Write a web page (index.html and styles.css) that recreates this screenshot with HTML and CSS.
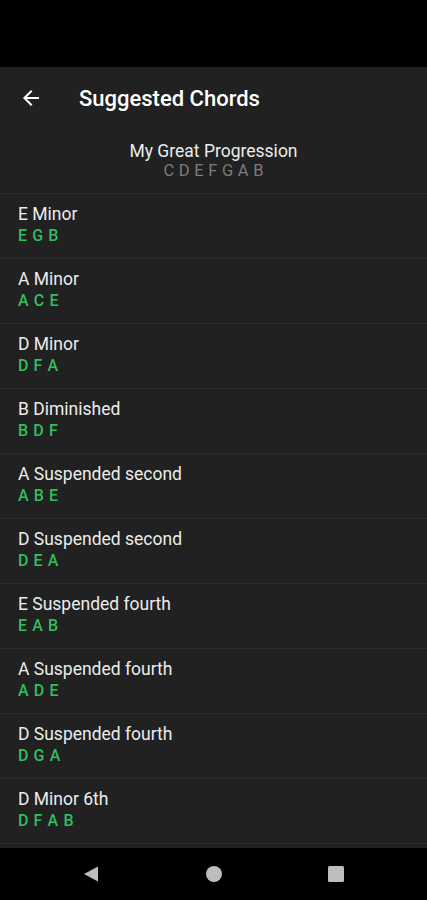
FILE: index.html
```html
<!DOCTYPE html>
<html lang="en">
<head>
    <meta charset="UTF-8">
    <meta name="viewport" content="width=device-width, initial-scale=1.0">
    <title>Suggested Chords</title>
    <link rel="stylesheet" href="styles.css">
</head>
<body>
    <div class="status-bar"></div>

    <div class="app">
        <header class="app-bar">
            <svg class="back" width="24" height="24" viewBox="0 0 24 24">
                <path d="M20 11H7.83l5.59-5.59L12 4l-8 8 8 8 1.41-1.41L7.83 13H20v-2z" fill="#fff"/>
            </svg>
            <h1>Suggested Chords</h1>
        </header>

        <div class="progression">
            <div class="prog-name">My Great Progression</div>
            <div class="prog-notes">CDEFGAB</div>
        </div>

        <ul class="chords">
            <li><div class="name">E Minor</div><div class="notes">E G B</div></li>
            <li><div class="name">A Minor</div><div class="notes">A C E</div></li>
            <li><div class="name">D Minor</div><div class="notes">D F A</div></li>
            <li><div class="name">B Diminished</div><div class="notes">B D F</div></li>
            <li><div class="name">A Suspended second</div><div class="notes">A B E</div></li>
            <li><div class="name">D Suspended second</div><div class="notes">D E A</div></li>
            <li><div class="name">E Suspended fourth</div><div class="notes">E A B</div></li>
            <li><div class="name">A Suspended fourth</div><div class="notes">A D E</div></li>
            <li><div class="name">D Suspended fourth</div><div class="notes">D G A</div></li>
            <li><div class="name">D Minor 6th</div><div class="notes">D F A B</div></li>
        </ul>
    </div>

    <nav class="nav-bar">
        <svg width="18" height="18" viewBox="0 0 18 18"><path d="M16 1.5v15L2 9z" fill="#bdbdbd"/></svg>
        <svg width="18" height="18" viewBox="0 0 18 18"><circle cx="9" cy="9" r="8" fill="#bdbdbd"/></svg>
        <svg width="18" height="18" viewBox="0 0 18 18"><rect x="1" y="1" width="16" height="16" rx="1.5" fill="#bdbdbd"/></svg>
    </nav>
</body>
</html>
```

FILE: styles.css
```css
body { margin: 0; background: #000; font-family: Roboto, "Liberation Sans", sans-serif; color: #ececec; }
.status-bar { height: 67px; background: #000; }
.app { background: #212121; height: 781px; overflow: hidden; }
.app-bar { height: 62px; display: flex; align-items: center; padding-left: 19px; }
.app-bar .back { margin-right: 36px; }
.app-bar h1 { margin: 0; font-size: 22px; font-weight: 500; color: #fff; }
.progression { height: 64px; display: flex; flex-direction: column; align-items: center; padding-top: 12px; box-sizing: border-box; }
.prog-name { font-size: 17.5px; line-height: 20px; color: #ececec; }
.prog-notes { font-size: 16.5px; line-height: 20px; color: #7c7c7c; letter-spacing: 4.6px; margin-right: -4.6px; }
.chords { list-style: none; margin: 0; padding: 0; border-top: 1px solid #2c2c2c; }
.chords li { height: 65px; box-sizing: border-box; padding: 10px 18px; border-bottom: 1px solid #2c2c2c; }
.chords .name { font-size: 17.5px; line-height: 21px; color: #ececec; }
.chords .notes { font-size: 16px; line-height: 21px; color: #2fbf5f; font-weight: 500; letter-spacing: 0.6px; }
.nav-bar { height: 52px; display: flex; align-items: center; justify-content: space-between; padding: 0 82px; box-sizing: border-box; }
```
